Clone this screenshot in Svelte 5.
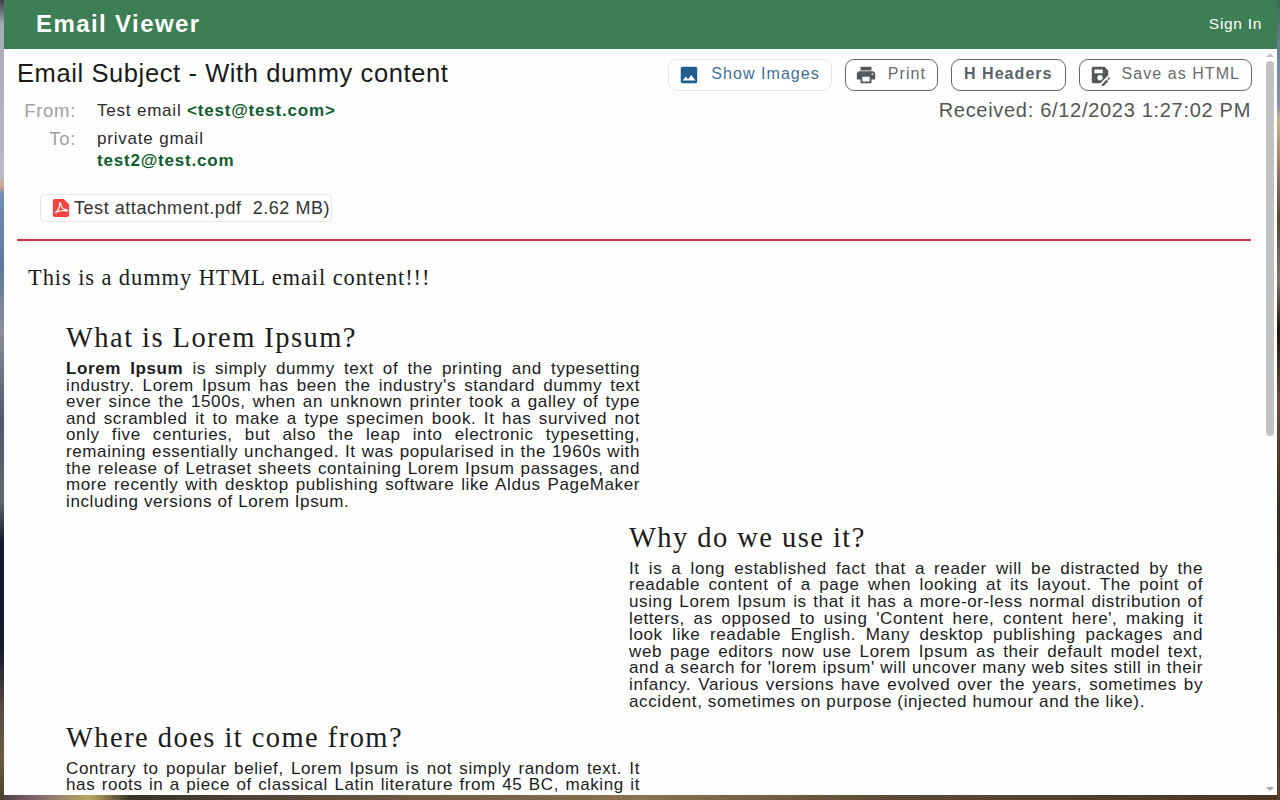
<script lang="ts">
	const sections = [
		{
			title: 'What is Lorem Ipsum?',
			lead: 'Lorem Ipsum',
			body: " is simply dummy text of the printing and typesetting industry. Lorem Ipsum has been the industry's standard dummy text ever since the 1500s, when an unknown printer took a galley of type and scrambled it to make a type specimen book. It has survived not only five centuries, but also the leap into electronic typesetting, remaining essentially unchanged. It was popularised in the 1960s with the release of Letraset sheets containing Lorem Ipsum passages, and more recently with desktop publishing software like Aldus PageMaker including versions of Lorem Ipsum.",
			right: false
		},
		{
			title: 'Why do we use it?',
			lead: '',
			body: "It is a long established fact that a reader will be distracted by the readable content of a page when looking at its layout. The point of using Lorem Ipsum is that it has a more-or-less normal distribution of letters, as opposed to using 'Content here, content here', making it look like readable English. Many desktop publishing packages and web page editors now use Lorem Ipsum as their default model text, and a search for 'lorem ipsum' will uncover many web sites still in their infancy. Various versions have evolved over the years, sometimes by accident, sometimes on purpose (injected humour and the like).",
			right: true
		},
		{
			title: 'Where does it come from?',
			lead: '',
			body: 'Contrary to popular belief, Lorem Ipsum is not simply random text. It has roots in a piece of classical Latin literature from 45 BC, making it over 2000 years old.',
			right: false
		}
	];
</script>

<div class="window">
	<header class="topbar">
		<span class="brand">Email Viewer</span>
		<span class="signin">Sign In</span>
	</header>

	<div class="main">
		<div class="content">
			<div class="subject-row">
				<h1>Email Subject - With dummy content</h1>
				<div class="actions">
					<button class="btn soft">
						<svg viewBox="0 0 24 24"><path d="M21 19V5c0-1.1-.9-2-2-2H5c-1.1 0-2 .9-2 2v14c0 1.1.9 2 2 2h14c1.1 0 2-.9 2-2zM8.5 13.5l2.5 3.01L14.5 12l4.5 6H5l3.5-4.5z" /></svg>
						Show Images
					</button>
					<button class="btn">
						<svg viewBox="0 0 24 24"><path d="M19 8H5c-1.66 0-3 1.34-3 3v6h4v4h12v-4h4v-6c0-1.66-1.34-3-3-3zm-3 11H8v-5h8v5zm3-7c-.55 0-1-.45-1-1s.45-1 1-1 1 .45 1 1-.45 1-1 1zm-1-9H6v4h12V3z" /></svg>
						Print
					</button>
					<button class="btn headers">H Headers</button>
					<button class="btn">
						<svg viewBox="0 0 24 24"><path d="M21 12.4V7l-4-4H5C3.89 3 3 3.9 3 5v14c0 1.1.89 2 2 2h7.4L21 12.4zM15 15c0 1.66-1.34 3-3 3s-3-1.34-3-3 1.34-3 3-3 3 1.34 3 3zM6 6h9v4H6V6zm13.99 10.25 1.77-1.77L23 15.72l-1.77 1.77-1.24-1.24zM19.24 17l1.77 1.77L15.77 24H14v-1.77L19.24 17z" /></svg>
						Save as HTML
					</button>
				</div>
			</div>

			<div class="meta">
				<div class="addresses">
					<div class="addr-row">
						<span class="label">From:</span>
						<span class="value">Test email <b>&lt;test@test.com&gt;</b></span>
					</div>
					<div class="addr-row to">
						<span class="label">To:</span>
						<span class="value">private gmail<br /><b>test2@test.com</b></span>
					</div>
				</div>
				<div class="received">Received: 6/12/2023 1:27:02 PM</div>
			</div>

			<div class="attachment">
				<svg viewBox="0 0 20 20" class="pdf">
					<path class="sheet" d="M3 0h10l6 6v12a2 2 0 0 1-2 2H3a2 2 0 0 1-2-2V2a2 2 0 0 1 2-2z" />
					<path class="swoosh" d="M3.5 15.5c2.5-1.2 5-6 5-10 0-1.6 1.4-1.4 1.3.2-.2 3 2.5 6 6.7 6.4 1.4.2.8 1.5-.6 1.2-3.4-.7-7.4-.6-10.4 1.2" />
				</svg>
				<span>Test attachment.pdf&nbsp; 2.62 MB)</span>
			</div>

			<hr />

			<div class="mail-body">
				<p class="intro">This is a dummy HTML email content!!!</p>
				{#each sections as s}
					<section class:right={s.right}>
						<h2>{s.title}</h2>
						<p>{#if s.lead}<strong>{s.lead}</strong>{/if}{s.body}</p>
					</section>
				{/each}
			</div>
		</div>

		<div class="rail" aria-hidden="true">
			<span class="arrow up"></span>
			<div class="track"><div class="thumb"></div></div>
			<span class="arrow down"></span>
		</div>
	</div>
</div>

<style>
	:global(body) {
		margin: 0;
		height: 800px;
		overflow: hidden;
		font-family: 'Liberation Sans', Arial, sans-serif;
		background-color: #4a3a30;
		background-repeat: no-repeat;
		background-size:
			4px 100%,
			3px 100%,
			100% 5px;
		background-position:
			left top,
			right top,
			left bottom;
		background-image:
			linear-gradient(
				180deg,
				#3c3f4c 0,
				#a9aab8 24px,
				#b9bac6 175px,
				#cfa690 186px,
				#6f90b4 194px,
				#60789a 270px,
				#8c8f9c 330px,
				#4f5a6c 420px,
				#5c6a70 500px,
				#10182c 545px,
				#141c2c 650px,
				#5a4c44 710px,
				#6a5a40 760px,
				#4c4030 800px
			),
			linear-gradient(
				180deg,
				#3c6a58 0,
				#7386a6 60px,
				#8490a8 105px,
				#c0b48a 120px,
				#b08c70 150px,
				#5a4636 220px,
				#7c7468 280px,
				#1c1410 330px,
				#6a4a34 400px,
				#3a2a20 520px,
				#5a3f2c 800px
			),
			linear-gradient(
				90deg,
				#4a3c44 0,
				#8a6a70 40px,
				#b8a860 90px,
				#3a3228 130px,
				#6a5844 400px,
				#8a7250 640px,
				#5a4836 900px,
				#4a3426 1280px
			);
	}

	.window {
		display: flex;
		flex-direction: column;
		height: 795px;
		margin: 0 3px 0 4px;
		background: #fefefe;
		overflow: hidden;
	}

	.topbar {
		flex: none;
		display: flex;
		align-items: center;
		justify-content: space-between;
		height: 49px;
		padding: 0 15px 2px 32px;
		box-sizing: border-box;
		background: #3d7e55;
		color: #fff;
	}

	.brand {
		font-size: 24px;
		font-weight: 700;
		letter-spacing: 1.4px;
	}

	.signin {
		font-size: 15.5px;
		letter-spacing: 0.7px;
	}

	.main {
		flex: 1;
		display: flex;
		min-height: 0;
	}

	.content {
		flex: 1;
		min-width: 0;
		overflow: hidden;
		padding: 10px 12px 0 13px;
	}

	.subject-row {
		display: flex;
		justify-content: space-between;
		align-items: flex-start;
	}

	h1 {
		margin: 0;
		font-size: 25.5px;
		font-weight: 400;
		line-height: 28px;
		letter-spacing: 0.6px;
		white-space: nowrap;
		color: #1a1a1a;
	}

	.actions {
		display: flex;
		gap: 13px;
		margin-right: -1px;
	}

	.btn {
		display: flex;
		align-items: center;
		gap: 11px;
		height: 32px;
		padding: 0 11px 2px 9px;
		border: 1px solid #66696b;
		border-radius: 9px;
		background: #fff;
		color: #686b6d;
		font-family: inherit;
		font-size: 16px;
		letter-spacing: 1.05px;
		white-space: nowrap;
	}

	.btn svg {
		width: 22px;
		height: 22px;
		margin-top: 2px;
		fill: #55585a;
	}

	.btn.soft {
		border-color: #e2e5e8;
		color: #3f6f96;
	}

	.btn.soft svg {
		fill: #1f5f8f;
	}

	.btn.headers {
		padding: 0 12px 2px;
		font-weight: 700;
		color: #5a6268;
	}

	.meta {
		display: flex;
		justify-content: space-between;
		align-items: flex-start;
		margin-top: 9px;
	}

	.addr-row {
		display: flex;
		font-size: 17px;
		line-height: 22px;
		letter-spacing: 0.8px;
		color: #2a2a2a;
	}

	.addr-row.to {
		margin-top: 6px;
	}

	.label {
		width: 59px;
		margin-right: 21px;
		text-align: right;
		font-size: 18.5px;
		letter-spacing: 0.7px;
		color: #a0a0a0;
	}

	.value b {
		color: #0f5c2e;
	}

	.received {
		margin-top: -1px;
		font-size: 20px;
		line-height: 22px;
		letter-spacing: 0.7px;
		color: #555;
	}

	.attachment {
		display: inline-flex;
		align-items: center;
		gap: 4px;
		height: 26px;
		margin: 22px 0 0 23px;
		padding: 0 1px 0 11px;
		border: 1px solid #e6e6e6;
		border-radius: 4px;
		font-size: 18px;
		letter-spacing: 0.55px;
		color: #333;
	}

	.pdf {
		width: 18px;
		height: 20px;
	}

	.sheet {
		fill: #f8423f;
	}

	.swoosh {
		fill: none;
		stroke: #fff;
		stroke-width: 1.4;
	}

	hr {
		height: 2px;
		margin: 17px 0 0;
		border: 0;
		background: #c8323c;
	}

	.mail-body {
		padding: 25px 0 0 11px;
		color: #1c1c1c;
	}

	.intro {
		margin: 0 0 33px;
		font-family: 'Liberation Serif', 'Times New Roman', serif;
		font-size: 22.5px;
		line-height: 24px;
		letter-spacing: 0.9px;
	}

	section {
		width: 574px;
		margin: 0 0 0 38px;
	}

	section.right {
		margin-left: 601px;
	}

	h2 {
		margin: 12.5px 0 8px;
		font-family: 'Liberation Serif', 'Times New Roman', serif;
		font-size: 28.5px;
		font-weight: 400;
		line-height: 30px;
		letter-spacing: 1.45px;
	}

	section p {
		margin: 0;
		font-size: 17px;
		line-height: 16.6px;
		letter-spacing: 0.61px;
		text-align: justify;
	}

	.rail {
		flex: none;
		display: flex;
		flex-direction: column;
		align-items: center;
		width: 13px;
		padding-right: 1px;
	}

	.arrow {
		flex: none;
		width: 0;
		height: 0;
		margin: 3px 0;
		border-left: 4px solid transparent;
		border-right: 4px solid transparent;
	}

	.arrow.up {
		margin-top: 4px;
		border-bottom: 4px solid #c4c4c4;
	}

	.arrow.down {
		margin-bottom: 4px;
		border-top: 4px solid #a8a8a8;
	}

	.track {
		flex: 1;
		width: 100%;
		display: flex;
		justify-content: center;
	}

	.thumb {
		width: 8px;
		height: 375px;
		margin-top: 1px;
		border-radius: 4px;
		background: #c2c2c2;
	}
</style>
